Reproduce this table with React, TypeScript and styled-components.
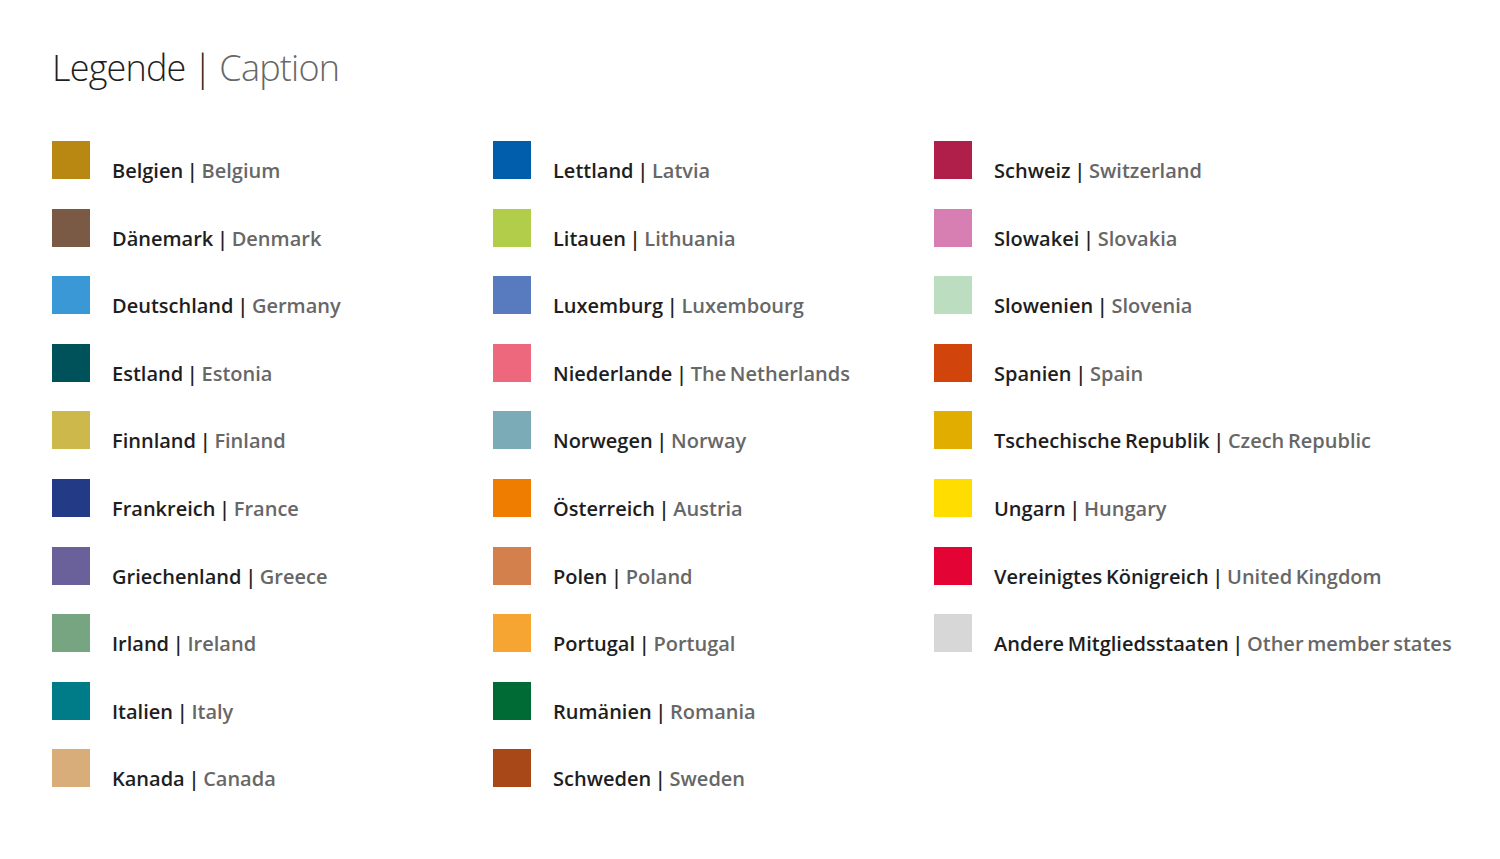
import React from 'react';
import styled, { createGlobalStyle } from 'styled-components';

type Entry = {
  de: string;
  en: string;
  color: string;
};

const columns: Entry[][] = [
  [
    { de: 'Belgien', en: 'Belgium', color: '#b88812' },
    { de: 'Dänemark', en: 'Denmark', color: '#7b5a45' },
    { de: 'Deutschland', en: 'Germany', color: '#3a98d7' },
    { de: 'Estland', en: 'Estonia', color: '#00525a' },
    { de: 'Finnland', en: 'Finland', color: '#cdb94b' },
    { de: 'Frankreich', en: 'France', color: '#233b87' },
    { de: 'Griechenland', en: 'Greece', color: '#6a619b' },
    { de: 'Irland', en: 'Ireland', color: '#78a581' },
    { de: 'Italien', en: 'Italy', color: '#007c89' },
    { de: 'Kanada', en: 'Canada', color: '#d9ad7a' },
  ],
  [
    { de: 'Lettland', en: 'Latvia', color: '#005ead' },
    { de: 'Litauen', en: 'Lithuania', color: '#b2cd49' },
    { de: 'Luxemburg', en: 'Luxembourg', color: '#577bbe' },
    { de: 'Niederlande', en: 'The Netherlands', color: '#ed687c' },
    { de: 'Norwegen', en: 'Norway', color: '#7aabb6' },
    { de: 'Österreich', en: 'Austria', color: '#ef7d00' },
    { de: 'Polen', en: 'Poland', color: '#d3804d' },
    { de: 'Portugal', en: 'Portugal', color: '#f6a532' },
    { de: 'Rumänien', en: 'Romania', color: '#006b34' },
    { de: 'Schweden', en: 'Sweden', color: '#a84818' },
  ],
  [
    { de: 'Schweiz', en: 'Switzerland', color: '#af1f4a' },
    { de: 'Slowakei', en: 'Slovakia', color: '#d77eb3' },
    { de: 'Slowenien', en: 'Slovenia', color: '#bcddc0' },
    { de: 'Spanien', en: 'Spain', color: '#d1450c' },
    { de: 'Tschechische Republik', en: 'Czech Republic', color: '#e1ae00' },
    { de: 'Ungarn', en: 'Hungary', color: '#ffdd00' },
    { de: 'Vereinigtes Königreich', en: 'United Kingdom', color: '#e30435' },
    { de: 'Andere Mitgliedsstaaten', en: 'Other member states', color: '#d7d7d7' },
  ],
];

const App: React.FC = () => {
  return (
    <>
      <GlobalStyle />
      <StyledPage>
        <StyledTitle>
          Legende | <StyledTitleMuted>Caption</StyledTitleMuted>
        </StyledTitle>
        <StyledGrid>
          {columns.map((column, c) => (
            // eslint-disable-next-line react/no-array-index-key
            <StyledColumn key={c}>
              {column.map((entry) => (
                <StyledItem key={entry.de}>
                  <StyledSwatch color={entry.color} />
                  <StyledLabel>
                    {entry.de} | <StyledLabelMuted>{entry.en}</StyledLabelMuted>
                  </StyledLabel>
                </StyledItem>
              ))}
            </StyledColumn>
          ))}
        </StyledGrid>
      </StyledPage>
    </>
  );
};
export default App;

const textDark = '#1e1e1e';
const textMuted = '#676767';

const GlobalStyle = createGlobalStyle`
  html, body {
    margin: 0;
    padding: 0;
    background: #ffffff;
  }
  body {
    font-family: "Open Sans", "Noto Sans", "Liberation Sans", sans-serif;
  }
`;

const StyledPage = styled.div`
  width: 1500px;
  height: 859px;
  box-sizing: border-box;
  padding: 44px 0 0 52px;
`;

const StyledTitle = styled.h1`
  margin: 0;
  font-size: 36px;
  line-height: 48px;
  font-weight: 300;
  letter-spacing: -0.8px;
  word-spacing: -1px;
  color: ${textDark};
`;

const StyledTitleMuted = styled.span`
  color: ${textMuted};
`;

const StyledGrid = styled.div`
  display: grid;
  grid-template-columns: 441px 441px 441px;
  margin-top: 49px;
`;

const StyledColumn = styled.div`
  display: flex;
  flex-direction: column;
`;

const StyledItem = styled.div`
  display: flex;
  align-items: flex-start;
  height: 67.6px;
`;

const StyledSwatch = styled.div<{ color: string }>`
  width: 38px;
  height: 38px;
  flex-shrink: 0;
  background-color: ${(props) => props.color};
`;

const StyledLabel = styled.div`
  margin: 18px 0 0 22px;
  font-size: 20px;
  line-height: 24px;
  font-weight: 600;
  word-spacing: -1.5px;
  color: ${textDark};
  white-space: nowrap;
`;

const StyledLabelMuted = styled.span`
  color: ${textMuted};
`;
